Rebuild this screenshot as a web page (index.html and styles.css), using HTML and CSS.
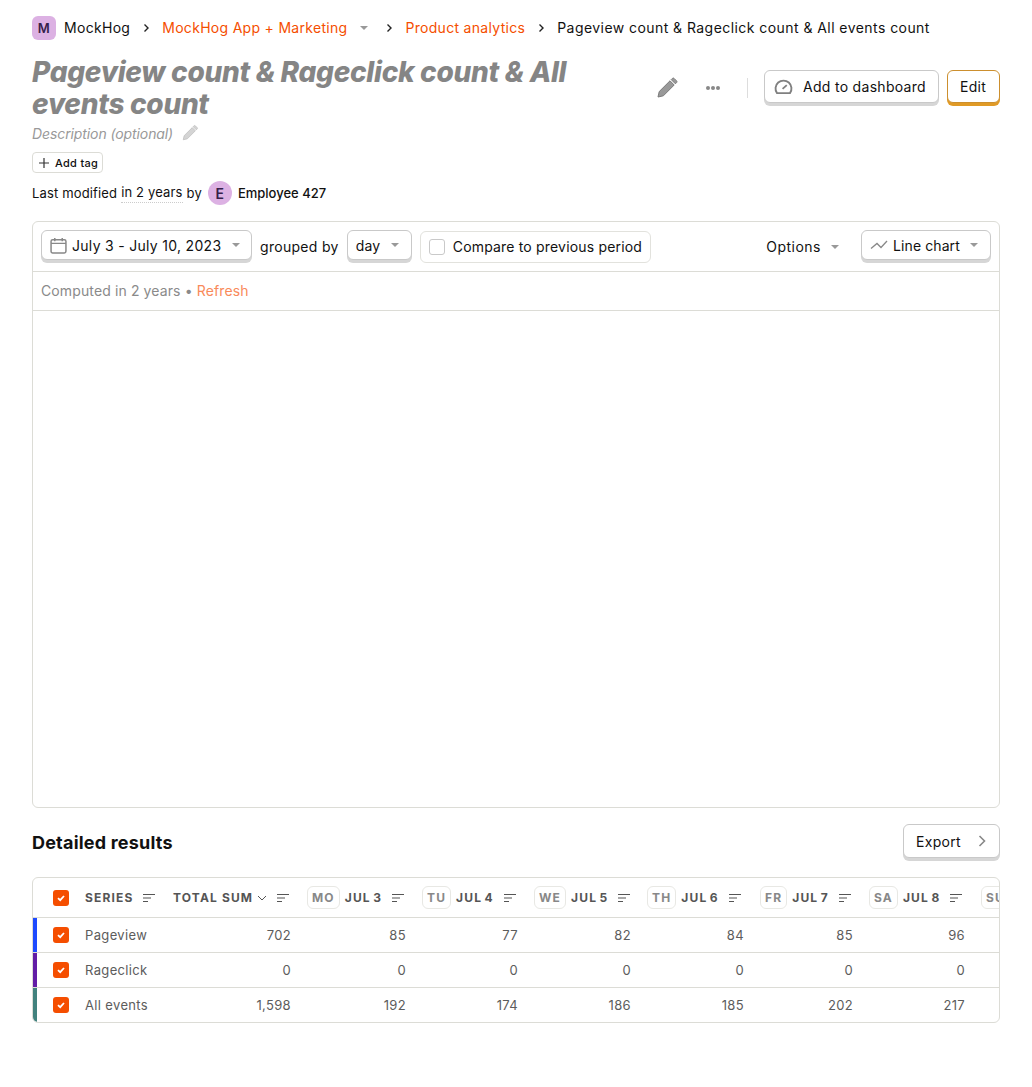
FILE: index.html
```html
<!DOCTYPE html>
<html lang="en">
<head>
  <meta charset="UTF-8" />
  <title>Pageview count &amp; Rageclick count &amp; All events count</title>
  <link rel="stylesheet" href="styles.css">
</head>
<body>

<nav class="crumbs">
  <span class="team-logo">M</span>
  <span class="crumb">MockHog</span>
  <svg class="crumb-sep" viewBox="0 0 8 10"><path d="M2.500 1.500 6 5 2.500 8.500" /></svg>
  <a class="crumb link">MockHog App + Marketing</a>
  <span class="caret crumb-caret"></span>
  <svg class="crumb-sep" viewBox="0 0 8 10"><path d="M2.500 1.500 6 5 2.500 8.500" /></svg>
  <a class="crumb link">Product analytics</a>
  <svg class="crumb-sep" viewBox="0 0 8 10"><path d="M2.500 1.500 6 5 2.500 8.500" /></svg>
  <span class="crumb crumb-last">Pageview count &amp; Rageclick count &amp; All events count</span>
</nav>

<header class="page-head">
  <div class="head-left">
    <h1>Pageview count &amp; Rageclick count &amp; All events count</h1>
    <div class="description">
      Description (optional)
      <svg class="pencil small" viewBox="0 0 20 20"><path d="M2.500 17.500l1-4.500L12.500 4l3.500 3.500-9 9z M13.500 3l1-1a1 1 0 0 1 1.400 0l2.100 2.100a1 1 0 0 1 0 1.400l-1 1z" /></svg>
    </div>
    <button class="add-tag">
      <svg viewBox="0 0 12 12"><path d="M6 1v10M1 6h10" /></svg>
      Add tag
    </button>
    <div class="modified">
      Last modified <span class="dotted">in 2 years</span> by
      <span class="avatar">E</span>
      <span class="author">Employee 427</span>
    </div>
  </div>
  <div class="head-actions">
    <svg class="pencil" viewBox="0 0 20 20"><path d="M2.500 17.500l1-4.500L12.500 4l3.500 3.500-9 9z M13.500 3l1-1a1 1 0 0 1 1.400 0l2.100 2.100a1 1 0 0 1 0 1.400l-1 1z" /></svg>
    <span class="dots"><i></i><i></i><i></i></span>
    <span class="v-divider"></span>
    <button class="btn btn-dashboard">
      <svg class="gauge" viewBox="0 0 20 16"><path d="M3 15a8.500 8.500 0 1 1 14 0z" /><path d="M9 10.500l4.500-4" /></svg>
      Add to dashboard
    </button>
    <button class="btn btn-edit">Edit</button>
  </div>
</header>

<section class="insight-card">
  <div class="toolbar">
    <button class="btn btn-date">
      <svg class="calendar" viewBox="0 0 16 16"><rect x="1" y="2.500" width="14" height="12.500" rx="1.500" /><path d="M1 6h14M4.500 1v3M11.500 1v3" /></svg>
      July 3 - July 10, 2023
      <span class="caret"></span>
    </button>
    <span class="grouped">grouped by</span>
    <button class="btn btn-interval">day<span class="caret"></span></button>
    <label class="compare"><span class="empty-box"></span>Compare to previous period</label>
    <span class="options">Options<span class="caret"></span></span>
    <button class="btn btn-chart">
      <svg class="trend" viewBox="0 0 18 10"><path d="M1 8.500l6-5 4 4 6-6.500" /></svg>
      Line chart
      <span class="caret"></span>
    </button>
  </div>
  <div class="computed">Computed in 2 years • <a>Refresh</a></div>
  <div class="chart-area"></div>
</section>

<div class="results-head">
  <h2>Detailed results</h2>
  <button class="btn btn-export">
    Export
    <svg viewBox="0 0 10 14"><path d="M2.500 2 7.500 7l-5 5" /></svg>
  </button>
</div>

<div class="table-card">
  <table>
    <colgroup>
      <col class="c-check"><col class="c-series"><col class="c-total"><col class="c-115"><col class="c-112"><col class="c-113"><col class="c-113"><col class="c-109"><col class="c-112"><col class="c-115">
    </colgroup>
    <thead>
      <tr>
        <th class="check-cell"><span class="check"><svg viewBox="0 0 10 10"><path d="M2 5.200 4.200 7.200 8 3" /></svg></span></th>
        <th><span class="th-in">SERIES<svg class="sort" viewBox="0 0 14 10"><path d="M1 1.500h12M1 5h8M1 8.500h5" /></svg></span></th>
        <th><span class="th-in">TOTAL SUM<svg class="sorted" viewBox="0 0 10 6"><path d="M1 1 5 5 9 1" /></svg><svg class="sort" viewBox="0 0 14 10"><path d="M1 1.500h12M1 5h8M1 8.500h5" /></svg></span></th>
        <th class="date-col"><span class="th-in"><span class="day">MO</span>JUL 3<svg class="sort" viewBox="0 0 14 10"><path d="M1 1.500h12M1 5h8M1 8.500h5" /></svg></span></th>
        <th class="date-col"><span class="th-in"><span class="day">TU</span>JUL 4<svg class="sort" viewBox="0 0 14 10"><path d="M1 1.500h12M1 5h8M1 8.500h5" /></svg></span></th>
        <th class="date-col"><span class="th-in"><span class="day">WE</span>JUL 5<svg class="sort" viewBox="0 0 14 10"><path d="M1 1.500h12M1 5h8M1 8.500h5" /></svg></span></th>
        <th class="date-col"><span class="th-in"><span class="day">TH</span>JUL 6<svg class="sort" viewBox="0 0 14 10"><path d="M1 1.500h12M1 5h8M1 8.500h5" /></svg></span></th>
        <th class="date-col"><span class="th-in"><span class="day">FR</span>JUL 7<svg class="sort" viewBox="0 0 14 10"><path d="M1 1.500h12M1 5h8M1 8.500h5" /></svg></span></th>
        <th class="date-col"><span class="th-in"><span class="day">SA</span>JUL 8<svg class="sort" viewBox="0 0 14 10"><path d="M1 1.500h12M1 5h8M1 8.500h5" /></svg></span></th>
        <th class="date-col"><span class="th-in"><span class="day">SU</span></span></th>
      </tr>
    </thead>
    <tbody>
      <tr>
        <td class="check-cell series-blue"><span class="check"><svg viewBox="0 0 10 10"><path d="M2 5.200 4.200 7.200 8 3" /></svg></span></td>
        <td class="left">Pageview</td><td>702</td><td>85</td><td>77</td><td>82</td><td>84</td><td>85</td><td>96</td><td></td>
      </tr>
      <tr>
        <td class="check-cell series-purple"><span class="check"><svg viewBox="0 0 10 10"><path d="M2 5.200 4.200 7.200 8 3" /></svg></span></td>
        <td class="left">Rageclick</td><td>0</td><td>0</td><td>0</td><td>0</td><td>0</td><td>0</td><td>0</td><td></td>
      </tr>
      <tr>
        <td class="check-cell series-green"><span class="check"><svg viewBox="0 0 10 10"><path d="M2 5.200 4.200 7.200 8 3" /></svg></span></td>
        <td class="left">All events</td><td>1,598</td><td>192</td><td>174</td><td>186</td><td>185</td><td>202</td><td>217</td><td></td>
      </tr>
    </tbody>
  </table>
</div>

</body>
</html>
```

FILE: styles.css
```css
* {
  box-sizing: border-box;
}
body {
  margin: 0;
  padding: 16px 32px 64px;
  font-family: Inter, "Liberation Sans", sans-serif;
  font-size: 14px;
  color: #111;
  background: white;
  letter-spacing: 0.3px;
}
button {
  font: inherit;
  letter-spacing: inherit;
  color: inherit;
  cursor: pointer;
}

/* breadcrumbs */
.crumbs {
  display: flex;
  align-items: center;
  height: 24px;
}
.team-logo {
  width: 24px;
  height: 24px;
  border-radius: 6px;
  background: #dcb1e3;
  color: #35204a;
  font-weight: 600;
  font-size: 13px;
  display: flex;
  align-items: center;
  justify-content: center;
  margin-right: 8px;
}
.crumb {
  margin-bottom: 2px;
}
.crumb-sep {
  width: 8px;
  height: 10px;
  margin: 0 12px;
  fill: none;
  stroke: #222;
  stroke-width: 1.4;
}
.link {
  color: #f54e00;
}
.crumb-last {
  letter-spacing: 0.44px;
}
.caret {
  display: inline-block;
  width: 0;
  height: 0;
  border-left: 4px solid transparent;
  border-right: 4px solid transparent;
  border-top: 4px solid #999;
}
.crumb-caret {
  margin-left: 13px;
  margin-right: 5px;
}

/* page header */
.page-head {
  display: flex;
  justify-content: space-between;
  align-items: flex-start;
  margin-top: 16px;
}
.head-left {
  width: 590px;
}
h1 {
  margin: 0;
  font-size: 28px;
  line-height: 32px;
  font-style: italic;
  font-weight: 800;
  letter-spacing: -0.3px;
  color: #858585;
}
.description {
  display: flex;
  align-items: center;
  margin-top: 3px;
  height: 20px;
  font-style: italic;
  color: #999;
  letter-spacing: -0.1px;
}
.pencil {
  width: 24px;
  height: 24px;
  fill: #999;
  stroke: #777;
  stroke-width: 0.8;
}
.pencil.small {
  width: 18px;
  height: 18px;
  margin-left: 8px;
  fill: #d4d4d4;
  stroke: #bbb;
}
.add-tag {
  display: flex;
  align-items: center;
  height: 21px;
  margin-top: 9px;
  padding: 0 4px 0 5px;
  background: white;
  border: 1px solid #dcdcd6;
  border-radius: 4px;
  font-size: 11px;
  font-weight: 500;
  letter-spacing: 0.3px;
}
.add-tag svg {
  width: 12px;
  height: 12px;
  margin-right: 5px;
  fill: none;
  stroke: #333;
  stroke-width: 1.2;
}
.modified {
  display: flex;
  align-items: center;
  margin-top: 8px;
  height: 24px;
  font-size: 13px;
  letter-spacing: 0.15px;
}
.dotted {
  margin: 0 4px;
  border-bottom: 1px dotted #ccc;
  padding-bottom: 2px;
}
.avatar {
  width: 24px;
  height: 24px;
  margin: 0 6px;
  border-radius: 50%;
  background: #dcb1e3;
  color: #35204a;
  font-size: 14px;
  font-weight: 600;
  display: flex;
  align-items: center;
  justify-content: center;
}
.author {
  font-weight: 500;
  letter-spacing: 0;
}
.head-actions {
  display: flex;
  align-items: center;
  margin-top: 14px;
}
.dots {
  display: flex;
  gap: 1px;
  margin-left: 27px;
}
.dots i {
  width: 4px;
  height: 4px;
  border-radius: 50%;
  background: #888;
  display: block;
}
.v-divider {
  width: 1px;
  height: 20px;
  background: #ddd;
  margin: 0 16px 0 27px;
}

/* buttons */
.btn {
  display: inline-flex;
  align-items: center;
  background: white;
  border: 1px solid #c9c9c9;
  border-radius: 6px;
  box-shadow: 0 3px 0 0 #d6d6d6;
  padding: 0 12px;
  margin-bottom: 3px;
  white-space: nowrap;
}
.btn-dashboard {
  height: 33px;
  width: 175px;
  padding-left: 9px;
}
.gauge {
  width: 19px;
  height: 15px;
  margin-right: 10px;
  fill: none;
  stroke: #808080;
  stroke-width: 2;
}
.btn-edit {
  height: 33px;
  width: 53px;
  margin-left: 8px;
  border-color: #cc8f2e;
  box-shadow: 0 3px 0 0 #e09a26;
}

/* main card */
.insight-card {
  margin-top: 16px;
  border: 1px solid #dcdcd6;
  border-radius: 6px;
}
.toolbar {
  display: flex;
  align-items: center;
  height: 50px;
  padding: 0 8px;
  letter-spacing: 0.18px;
  border-bottom: 1px solid #dcdcd6;
}
.btn-date {
  height: 30px;
  width: 211px;
  padding: 0 11px 0 8px;
  letter-spacing: 0.3px;
}
.calendar {
  width: 17px;
  height: 17px;
  margin-right: 5px;
  fill: none;
  stroke: #888;
  stroke-width: 1.4;
}
.btn-date .caret,
.btn-chart .caret {
  margin-left: auto;
}
.grouped {
  margin: 0 8px;
  letter-spacing: 0.3px;
}
.btn-interval {
  height: 30px;
  width: 65px;
  padding: 0 12px 0 8px;
  justify-content: space-between;
}
.compare {
  display: flex;
  align-items: center;
  height: 32px;
  width: 231px;
  margin-left: 8px;
  padding-left: 8px;
  border: 1px solid #e2e2dd;
  border-radius: 6px;
}
.empty-box {
  width: 16px;
  height: 16px;
  margin-right: 8px;
  border: 1px solid #c9c9c9;
  border-radius: 3px;
}
.options {
  margin-left: auto;
  letter-spacing: 0.5px;
  display: flex;
  align-items: center;
}
.options .caret {
  margin-left: 10px;
}
.btn-chart {
  height: 30px;
  width: 130px;
  margin-left: 22px;
  padding: 0 12px 0 8px;
  letter-spacing: 0.1px;
}
.trend {
  width: 18px;
  height: 10px;
  margin-right: 5px;
  fill: none;
  stroke: #888;
  stroke-width: 1.3;
}
.computed {
  height: 39px;
  padding-left: 8px;
  line-height: 38px;
  color: #8a8a8a;
  letter-spacing: 0.12px;
  border-bottom: 1px solid #dcdcd6;
}
.computed a {
  color: #f98a5a;
}
.chart-area {
  height: 496px;
}

/* results */
.results-head {
  display: flex;
  justify-content: space-between;
  align-items: center;
  margin-top: 16px;
}
h2 {
  margin: 0;
  font-size: 18px;
  font-weight: 700;
  letter-spacing: 0.2px;
}
.btn-export {
  height: 34px;
  width: 97px;
  justify-content: space-between;
}
.btn-export svg {
  width: 10px;
  height: 14px;
  fill: none;
  stroke: #888;
  stroke-width: 1.6;
}
.table-card {
  margin-top: 16px;
  border: 1px solid #dcdcd6;
  border-radius: 6px;
  overflow: hidden;
}
table {
  table-layout: fixed;
  width: 1055px;
  border-collapse: separate;
  border-spacing: 0;
  font-size: 13px;
}
.c-check { width: 44px; }
.c-series { width: 88px; }
.c-total { width: 134px; }
.c-115 { width: 115px; }
.c-112 { width: 112px; }
.c-113 { width: 113px; }
.c-109 { width: 109px; }
th {
  height: 40px;
  padding: 0 8px;
  text-align: left;
  font-size: 12px;
  font-weight: 700;
  letter-spacing: 1.15px;
  color: #555;
  white-space: nowrap;
  border-bottom: 1px solid #dcdcd6;
}
.date-col {
  word-spacing: -1.5px;
}
.th-in {
  display: flex;
  align-items: center;
}
.day {
  height: 23px;
  padding: 0 4px;
  margin-right: 5px;
  border: 1px solid #e8e8e4;
  border-radius: 6px;
  color: #888;
  line-height: 21px;
}
.sort {
  width: 14px;
  height: 10px;
  margin-left: 9px;
  flex-shrink: 0;
  fill: none;
  stroke: #555;
  stroke-width: 1.1;
}
.sorted {
  width: 10px;
  height: 6px;
  margin-left: 4px;
  flex-shrink: 0;
  fill: none;
  stroke: #555;
  stroke-width: 1;
}
td {
  height: 35px;
  padding: 0 8px;
  text-align: right;
  color: #5c5c5c;
  letter-spacing: 0.35px;
  border-bottom: 1px solid #dcdcd6;
}
tbody tr:last-child td {
  height: 34px;
  border-bottom: none;
}
td.left {
  text-align: left;
}
.check-cell {
  padding: 0 0 0 20px;
  text-align: left;
}
.check {
  width: 16px;
  height: 16px;
  border-radius: 3px;
  background: #f54e00;
  display: flex;
  align-items: center;
  justify-content: center;
}
.check svg {
  width: 10px;
  height: 10px;
  fill: none;
  stroke: white;
  stroke-width: 1.8;
}
.series-blue { box-shadow: inset 4px 0 0 #1d4aff; }
.series-purple { box-shadow: inset 4px 0 0 #621da6; }
.series-green { box-shadow: inset 4px 0 0 #42827e; }
```
